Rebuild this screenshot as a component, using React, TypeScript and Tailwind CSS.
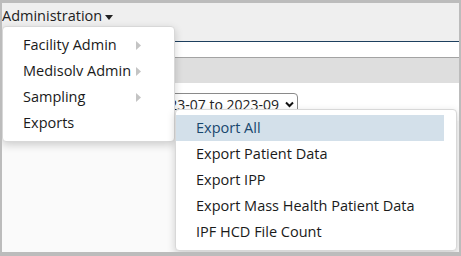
import React from "react";

const font = { fontFamily: '"Open Sans", "Noto Sans", sans-serif' };

const adminItems = [
  { label: "Facility Admin", sub: true },
  { label: "Medisolv Admin", sub: true },
  { label: "Sampling", sub: true },
  { label: "Exports", sub: false },
];

const exportItems = [
  "Export All",
  "Export Patient Data",
  "Export IPP",
  "Export Mass Health Patient Data",
  "IPF HCD File Count",
];

function Caret() {
  return (
    <svg width="8" height="5" viewBox="0 0 8 5" className="ml-[3px] mt-[2px]">
      <path d="M0 0h8L4 5z" fill="#222" />
    </svg>
  );
}

function SubArrow() {
  return (
    <svg width="5" height="9" viewBox="0 0 5 9">
      <path d="M0 0l5 4.5L0 9z" fill="#c4c4c4" />
    </svg>
  );
}

export default function App() {
  return (
    <div
      style={font}
      className="relative h-[256px] w-[461px] overflow-hidden border-x-2 border-t-[3px] border-b-[4px] border-[#bcbcbc] bg-[#fafafa] text-[14.5px] text-[#1a1a1a]"
    >
      <div className="flex h-[38px] items-start bg-[#efefef]">
        <div className="flex h-[27px] items-center text-[14.5px] leading-none text-[#222]">
          Administration
          <Caret />
        </div>
      </div>
      <div className="h-px bg-[#1d3f5e]" />
      <div className="h-[15px] bg-white" />
      <div className="h-[26px] border-t border-[#a3a3a3] bg-[#dedede]" />
      <div className="flex h-[38px] items-start bg-white pt-[10px]">
        <div className="ml-[150px] flex h-[23px] w-[146px] items-center justify-end gap-[6px] rounded-[4px] border border-[#8a8a8a] bg-white pr-[3px] text-[14px] leading-none text-[#222]">
          <span>2023-07 to 2023-09</span>
          <svg width="9" height="7" viewBox="0 0 9 7">
            <path d="M1 1.5l3.5 3.5L8 1.5" stroke="#111" strokeWidth="2" fill="none" />
          </svg>
        </div>
      </div>

      <div className="absolute left-0 top-[23px] w-[173px] rounded-[4px] border border-[#d8d8d8] bg-white py-[5px] shadow-[0_3px_8px_rgba(0,0,0,0.18)]">
        {adminItems.map((it) => (
          <div key={it.label} className="flex h-[26px] items-center pl-[20px] leading-none">
            <span className="w-[113px] whitespace-nowrap">{it.label}</span>
            {it.sub && <SubArrow />}
          </div>
        ))}
      </div>

      <div className="absolute left-[173px] top-[106px] w-[282px] rounded-[4px] border border-[#d8d8d8] bg-white py-[5px] shadow-[0_3px_8px_rgba(0,0,0,0.18)]">
        {exportItems.map((label, i) => (
          <div
            key={label}
            className={
              i === 0
                ? "mr-[12px] flex h-[26px] items-center bg-[#d3e0ea] pl-[20px] leading-none text-[#18476e]"
                : "flex h-[26px] items-center pl-[20px] leading-none"
            }
          >
            {label}
          </div>
        ))}
      </div>
    </div>
  );
}
